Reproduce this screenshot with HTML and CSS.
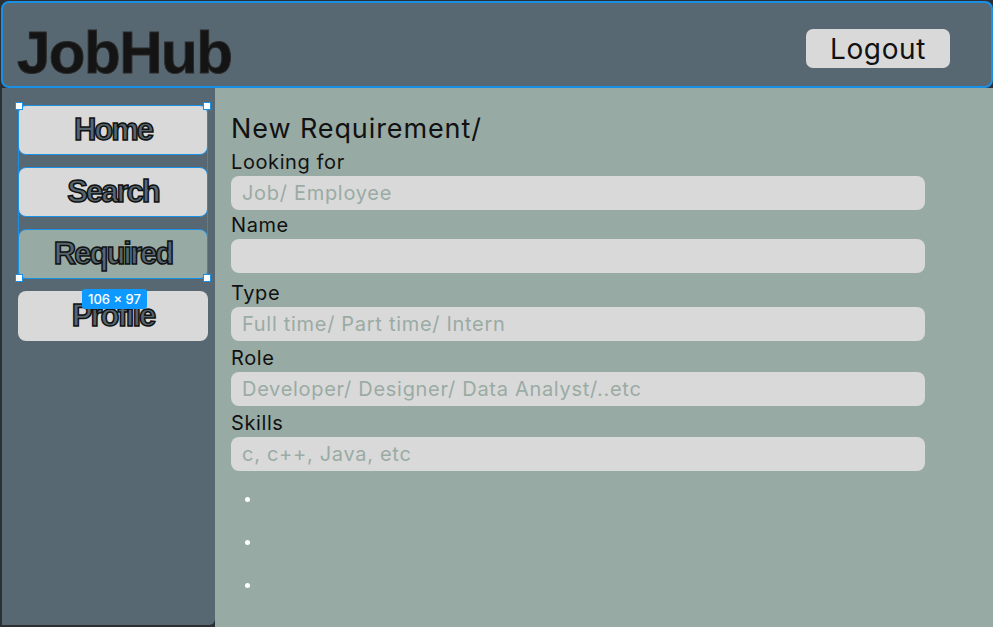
FILE: index.html
```html
<!doctype html>
<html lang="en">
<head>
  <meta charset="utf-8">
  <title>JobHub</title>
  <meta name="viewport" content="width=device-width, initial-scale=1">
  <link rel="stylesheet" href="styles.css">
</head>

<body>
  <div id="app">
    <header id="header">
      <h1 id="logo">JobHub</h1>
      <button type="button" id="btn_logout">Logout</button>
    </header>

    <div id="layout">
      <nav id="sidebar">
        <button type="button" class="nav_btn nav_btn_hover">Home</button>
        <button type="button" class="nav_btn nav_btn_hover">Search</button>
        <button type="button" class="nav_btn nav_btn_hover nav_btn_active">Required</button>
        <button type="button" class="nav_btn">Profile</button>

        <!-- editor selection overlay -->
        <div id="selection">
          <span class="handle handle_tl"></span>
          <span class="handle handle_tr"></span>
          <span class="handle handle_bl"></span>
          <span class="handle handle_br"></span>
          <span id="selection_size">106 × 97</span>
        </div>
      </nav>

      <main id="content">
        <h2 id="title">New Requirement/</h2>

        <label class="field_label" for="in_looking">Looking for</label>
        <input class="field_input" id="in_looking" type="text" placeholder="Job/ Employee">

        <label class="field_label field_label_tight" for="in_name">Name</label>
        <input class="field_input" id="in_name" type="text">

        <label class="field_label field_label_loose" for="in_type">Type</label>
        <input class="field_input" id="in_type" type="text" placeholder="Full time/ Part time/ Intern">

        <label class="field_label" for="in_role">Role</label>
        <input class="field_input" id="in_role" type="text" placeholder="Developer/ Designer/ Data Analyst/..etc">

        <label class="field_label" for="in_skills">Skills</label>
        <input class="field_input" id="in_skills" type="text" placeholder="c, c++, Java, etc">

        <ul id="dots">
          <li></li>
          <li></li>
          <li></li>
        </ul>
      </main>
    </div>
  </div>
</body>
</html>
```

FILE: styles.css
```css
html,
body {
  margin: 0;
  padding: 0;
  background: #2c2f33;
  font-family: Inter, "Noto Sans", sans-serif;
  overflow: hidden;
}

#app {
  width: 993px;
  height: 627px;
  display: flex;
  flex-direction: column;
}

#header {
  box-sizing: border-box;
  display: flex;
  align-items: flex-start;
  justify-content: space-between;
  height: 87px;
  margin: 1px 0 0 1px;
  padding: 20px 41px 0 14px;
  background: #576873;
  border: 2px solid #1a8fe6;
  border-radius: 8px;
}

#logo {
  margin: 0;
  font-family: "Liberation Sans", Arial, sans-serif;
  font-size: 60px;
  line-height: 60px;
  font-weight: bold;
  letter-spacing: -1.5px;
  color: #141414;
  -webkit-text-stroke: 1px #2a2a2a;
}

#btn_logout {
  margin-top: 6px;
  width: 144px;
  height: 39px;
  padding: 0;
  background: #d9d9d9;
  border: none;
  border-radius: 7px;
  font-family: Inter, sans-serif;
  font-size: 28px;
  letter-spacing: 0.6px;
  color: #111;
  cursor: pointer;
}

#layout {
  flex: 1;
  display: flex;
}

#sidebar {
  position: relative;
  box-sizing: border-box;
  width: 213px;
  margin-left: 2px;
  margin-bottom: 2px;
  padding: 17px 0 0 16px;
  display: flex;
  flex-direction: column;
  gap: 12px;
  background: #576873;
  border-bottom-right-radius: 6px;
}

.nav_btn {
  box-sizing: border-box;
  width: 190px;
  height: 50px;
  padding: 0;
  background: #d9d9d9;
  border: 1px solid transparent;
  border-radius: 8px;
  font-family: "Liberation Sans", Arial, sans-serif;
  font-size: 31px;
  font-weight: bold;
  letter-spacing: -2px;
  color: #56666f;
  -webkit-text-stroke: 1.5px #111;
  cursor: pointer;
}

.nav_btn_hover {
  border-color: #1a8fe6;
}

.nav_btn_active {
  background: #97aaa4;
}

#selection {
  position: absolute;
  left: 16px;
  top: 17px;
  width: 190px;
  height: 174px;
  box-sizing: border-box;
  border: 1px solid #1a8fe6;
  pointer-events: none;
}

.handle {
  position: absolute;
  box-sizing: border-box;
  width: 8px;
  height: 8px;
  background: #fff;
  border: 1px solid #1a8fe6;
}

.handle_tl { left: -4px; top: -4px; }
.handle_tr { right: -4px; top: -4px; }
.handle_bl { left: -4px; bottom: -4px; }
.handle_br { right: -4px; bottom: -4px; }

#selection_size {
  position: absolute;
  left: 63px;
  top: 183px;
  width: 65px;
  height: 20px;
  line-height: 20px;
  text-align: center;
  background: #0d99ff;
  border-radius: 3px;
  font-size: 13px;
  font-weight: 500;
  color: #fff;
}

#content {
  flex: 1;
  display: flex;
  flex-direction: column;
  align-items: flex-start;
  padding: 25px 0 0 16px;
  background: #97aaa4;
}

#title {
  margin: 0;
  font-size: 27px;
  line-height: 32px;
  font-weight: normal;
  letter-spacing: 0.9px;
  color: #111;
}

.field_label {
  margin: 5px 0 2px;
  font-size: 20px;
  line-height: 24px;
  letter-spacing: 0.6px;
  color: #111;
}

.field_label_tight {
  margin-top: 3px;
}

.field_label_loose {
  margin-top: 8px;
}

.field_input {
  box-sizing: border-box;
  width: 694px;
  height: 34px;
  padding: 0 11px;
  background: #d9d9d9;
  border: none;
  border-radius: 8px;
  font-family: Inter, sans-serif;
  font-size: 20px;
  letter-spacing: 0.7px;
  color: #111;
  outline: none;
}

.field_input::placeholder {
  color: #9aaba4;
}

#dots {
  list-style: none;
  margin: 26px 0 0;
  padding: 0 0 0 14px;
}

#dots li {
  height: 43px;
}

#dots li::before {
  content: "";
  display: block;
  width: 5px;
  height: 5px;
  border-radius: 50%;
  background: #fff;
}
```
